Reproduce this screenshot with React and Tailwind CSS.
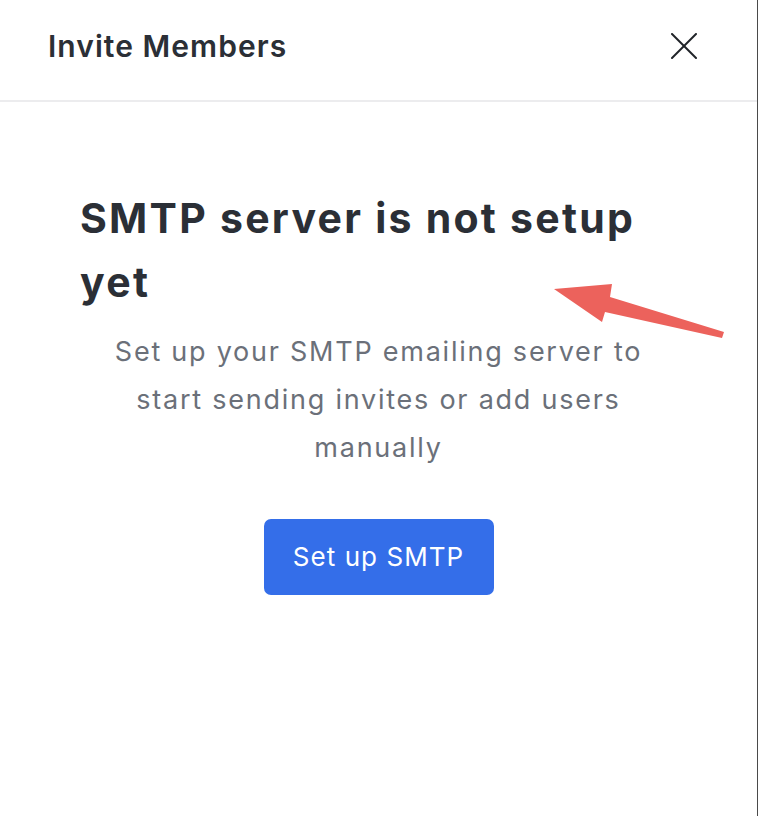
import React from 'react';

const font = { fontFamily: 'Inter, "Noto Sans", sans-serif' };

const App = () => {
  return (
    <div className="relative w-[758px] h-[816px] bg-white border-r border-[#4a4a4a] text-left" style={font}>
      {/* Header */}
      <div className="h-[102px] pb-[8px] flex items-center justify-between pl-[48px] pr-[60px] border-b-2 border-[#ececee]">
        <h2 className="text-[30px] leading-[40px] font-semibold tracking-[0.035em] text-[#2b2f36]">Invite Members</h2>
        <button className="w-[26px] h-[26px] flex items-center justify-center text-[#1f2328]">
          <svg width="26" height="26" viewBox="0 0 26 26" fill="none" stroke="currentColor" strokeWidth="2" strokeLinecap="round">
            <line x1="1" y1="1" x2="25" y2="25" />
            <line x1="25" y1="1" x2="1" y2="25" />
          </svg>
        </button>
      </div>

      {/* Empty state */}
      <div className="px-[80px] pt-[84px]">
        <h1 className="text-[41px] leading-[64px] font-bold tracking-[0.055em] text-[#2b2f36]">SMTP server is not setup yet</h1>
        <p className="mt-[14px] mx-auto max-w-[560px] text-[27px] leading-[48px] tracking-[0.065em] text-[#6b7079] text-center">
          Set up your SMTP emailing server to start sending invites or add users manually
        </p>
        <div className="mt-[47px] flex justify-center">
          <button className="h-[76px] w-[230px] rounded-[7px] bg-[#346ee9] text-white text-[26px] leading-[36px] tracking-[0.04em]">
            Set up SMTP
          </button>
        </div>
      </div>

      {/* Annotation arrow */}
      <svg className="absolute left-0 top-0 pointer-events-none" width="758" height="816">
        <polygon
          points="554,289 612,284 610,297 724,332 722,338 605,312 602,322"
          fill="#ec625c"
        />
      </svg>
    </div>
  );
};

export default App;
